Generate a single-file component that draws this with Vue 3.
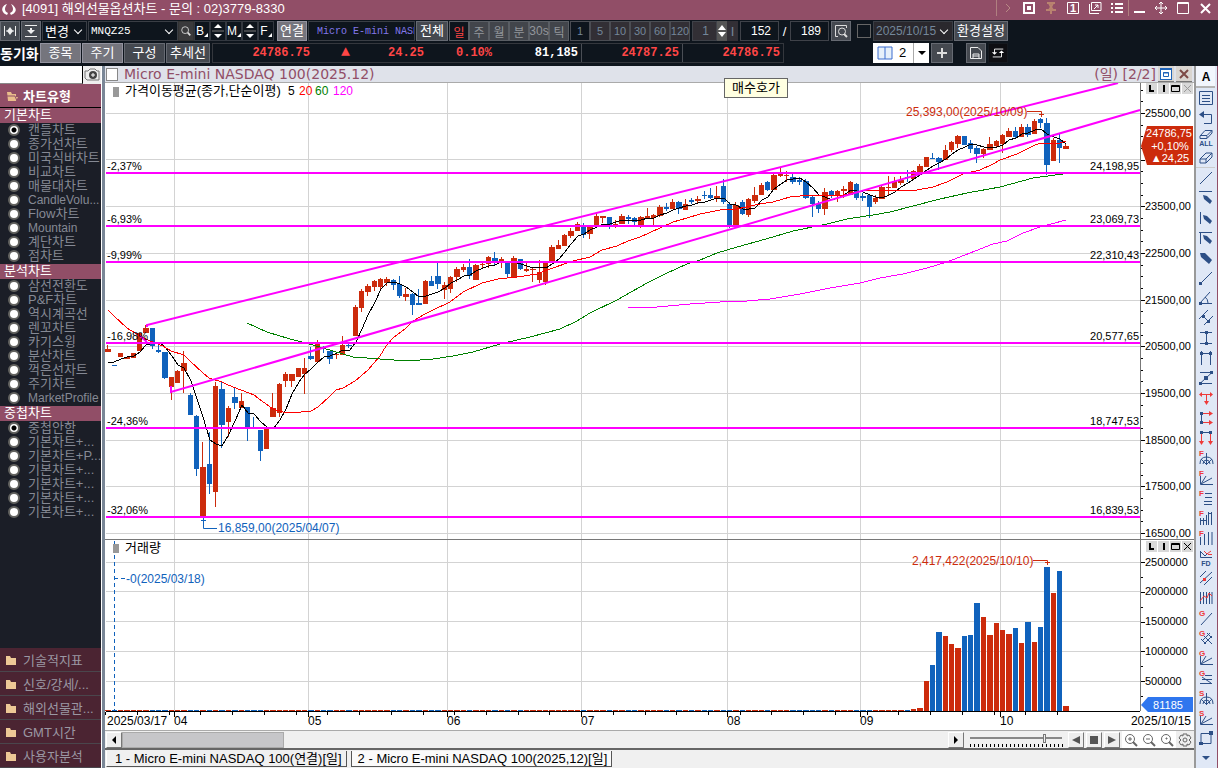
<template>
  <div class="chart-window">
    <header class="titlebar">
      <svg class="logo" viewBox="0 0 16 14">
        <path d="M6 1C2 2 0 6 2 9C3 11 5 11 6 12L7 10C5 9 4 8 4 6C4 4 5 3 6 1ZM10 1C14 3 16 7 14 9C13 11 11 11 10 12L9 10C11 9 12 8 12 6C12 4 11 3 10 1Z" fill="#fff" />
      </svg>
      <h1>[4091] 해외선물옵션차트 - 문의 : 02)3779-8330</h1>
      <div class="window-buttons">
        <button v-for="w in windowButtons" :key="w.name" :class="{ edge: w.edge }" :aria-label="w.name">
          <svg viewBox="0 0 14 14"><path :d="w.path" :stroke="w.color || '#fff'" :stroke-width="w.width || 1" :fill="w.fill || 'none'" /><text v-if="w.text" x="7" y="11" text-anchor="middle">{{ w.text }}</text></svg>
        </button>
      </div>
    </header>

    <!-- 종목 / 주기 선택 -->
    <div class="toolbar">
      <button class="tb icon-btn" aria-label="폭 맞춤"><svg viewBox="0 0 14 14"><path d="M1.5 2V12M12.5 2V12M3 7H11" stroke="#eee" /><path d="M7 3L10 7L7 11L4 7Z" fill="#eee" /></svg></button>
      <button class="tb icon-btn gap-1" aria-label="높이 맞춤"><svg viewBox="0 0 14 14"><path d="M1 1.5H13M1 12.5H13" stroke="#eee" /><path d="M3 6H11L7 10ZM6 4H8V6H6Z" fill="#eee" /></svg></button>
      <span class="select-box change"><select aria-label="변경"><option>변경</option></select></span>
      <span class="select-box symbol"><select aria-label="종목코드"><option>MNQZ25</option></select></span>
      <button class="tb search" aria-label="검색"><svg viewBox="0 0 14 14"><circle cx="6" cy="6" r="4" fill="none" stroke="#ddd" /><path d="M9 9L12 12" stroke="#ddd" stroke-width="2" /></svg></button>
      <template v-for="m in ['B', 'M', 'F']" :key="m">
        <button class="mini">{{ m }}<i></i></button>
        <button v-if="m !== 'F'" class="mini" :aria-label="m + ' 이동'"><svg viewBox="0 0 14 16"><path d="M7 1L11 5H3ZM7 15L11 11H3Z" fill="#fff" /><path d="M1 8H13" stroke="#777" /></svg></button>
      </template>
      <button class="tb light link-btn">연결</button>
      <input class="name-box" value=" Micro E-mini NASDAQ" aria-label="종목명" />
      <button class="tb all-btn">전체</button>
      <div class="segment">
        <button v-for="p in periods" :key="p" :class="{ on: p === '일' }">{{ p }}</button>
      </div>
      <div class="segment minutes">
        <button v-for="n in [1, 5, 10, 30, 60, 120]" :key="n" :class="{ on: n === 1 }">{{ n }}</button>
      </div>
      <input class="custom-min" value="1" aria-label="분" />
      <button class="spin" aria-label="증감"><svg viewBox="0 0 10 18"><path d="M5 3L9 8H1ZM5 15L9 10H1Z" fill="#fff" /></svg></button>
      <button class="apply">I</button>
      <input class="count-box" value="152" aria-label="표시 봉수" />
      <span class="slash">/</span>
      <input class="count-box" value="189" aria-label="전체 봉수" />
      <button class="tb icon-btn lookup" aria-label="조회"><svg viewBox="0 0 14 14"><path d="M4 12.5H1.5V1.5H12.5V4" fill="none" stroke="#ddd" /><circle cx="8" cy="7.500" r="3.500" fill="none" stroke="#ddd" /><path d="M10 10L13 13" stroke="#ddd" stroke-width="2" /></svg></button>
      <input type="checkbox" class="date-check" aria-label="기준일 사용" />
      <span class="select-box date"><select aria-label="기준일"><option>2025/10/15</option></select></span>
      <button class="tb config">환경설정</button>
    </div>

    <div class="toolbar quotes">
      <strong>동기화</strong>
      <button class="tb light w-40">종목</button>
      <button class="tb light w-40">주기</button>
      <button class="tb w-40">구성</button>
      <button class="tb w-44">추세선</button>
      <div class="quote-box">
        <span class="q-price">24786.75</span>
        <span class="q-arrow">▲</span>
        <span class="q-diff">24.25</span>
        <span class="q-rate">0.10%</span>
        <span class="q-vol">81,185</span>
        <span class="q-ask">24787.25</span>
        <span class="q-bid">24786.75</span>
      </div>
      <label class="layout-pick">
        <svg viewBox="0 0 16 14"><path d="M1 1H15V13H1ZM8 1V13" fill="#e6f0fa" stroke="#3a6ccf" /></svg>
        <select aria-label="화면 분할"><option>2</option></select>
        <i></i>
      </label>
      <button class="tb plus" aria-label="추가"><svg viewBox="0 0 14 14"><path d="M7 2V12M2 7H12" stroke="#ddd" stroke-width="2" /></svg></button>
      <button class="tb icon-btn save" aria-label="저장"><svg viewBox="0 0 14 14"><path d="M1.5 1.5H9L12.5 5V12.5H1.5ZM4 12V8H10V12M4 10H10" fill="none" stroke="#eee" /></svg></button>
      <button class="tb icon-btn swap" aria-label="새로고침"><svg viewBox="0 0 16 14"><path d="M14 2.500H4V7M2 11.500H12V6" fill="none" stroke="#fff" /><path d="M1 6H7L4 9ZM9 7H15L12 4Z" fill="#fff" /></svg></button>
    </div>

    <main class="workspace">
      <aside class="sidebar">
        <div class="side-search">
          <input type="text" aria-label="차트 검색" />
          <button aria-label="캡처"><svg viewBox="0 0 16 14"><path d="M1 3H4L6 1H11L13 3H15V12H3L1 10Z" fill="#eee" stroke="#777" /><circle cx="9" cy="7" r="4" fill="#444" /><path d="M9 5V9M7 7H11" stroke="#fff" /></svg></button>
        </div>
        <h2><svg viewBox="0 0 12 12"><path d="M1 2H5L6 4H10V7H12L10 11H2Z" fill="#e9bd8b" /><path d="M0 6H9L11 11" fill="none" stroke="#914e67" /></svg>차트유형</h2>
        <section v-for="group in chartGroups" :key="group.title">
          <h3>{{ group.title }}</h3>
          <ul>
            <li v-for="(item, i) in group.items" :key="i">
              <label :class="{ latin: /^[A-Za-z.]+$/.test(item) }">
                <input v-model="group.selected" type="radio" :name="group.title" :value="i" />
                <span>{{ item }}</span>
              </label>
            </li>
          </ul>
        </section>
        <nav>
          <button v-for="f in folders" :key="f"><svg viewBox="0 0 10 10"><path d="M0 1H4L5 3H10V10H0Z" fill="#edc896" /></svg>{{ f }}</button>
        </nav>
      </aside>

      <section class="chart-panel">
        <div class="chart-head">
          <input type="checkbox" aria-label="차트 선택" />
          <h2>Micro E-mini NASDAQ 100(2025.12)</h2>
          <span>(일) [2/2]</span>
          <button aria-label="최대화"><svg viewBox="0 0 14 14"><rect x="1" y="1" width="12" height="12" fill="#1e63b8" /><rect x="2" y="3" width="10" height="9" fill="#fff" /><path d="M4.500 5.500H9.500V9.500H4.500ZM4 6H10" fill="none" stroke="#1e63b8" /></svg></button>
          <button aria-label="닫기"><svg viewBox="0 0 14 14"><path d="M3 3L11 11M11 3L3 11" stroke="#7d4a45" stroke-width="2" /></svg></button>
        </div>
        <div class="tooltip">매수호가</div>
        <div v-for="pane in ['price', 'volume']" :key="pane" class="pane-tools" :class="pane">
          <button v-for="t in paneTools" :key="t.name" :aria-label="t.name"><svg viewBox="0 0 11 11"><path :d="t.path" fill="none" :stroke="pane === 'price' && t.name === '닫기' ? '#999' : '#000'" :stroke-width="t.width" /></svg></button>
        </div>

        <svg class="plot" viewBox="105 83 1089 648">
          <rect x="105" y="83" width="1089" height="648" fill="#fff" />
          <g class="grid">
            <path v-for="y in gridY" :key="y" :d="`M106 ${y}.5H1140`" />
            <path v-for="m in months" :key="m.x" :d="`M${m.x}.5 83V711`" />
          </g>

          <!-- 거래량 -->
          <g shape-rendering="crispEdges">
            <rect v-for="c in candles" :key="c.i" :x="c.x" :y="c.volTop" :width="c.w" :height="711 - c.volTop" :fill="c.color" />
          </g>

          <!-- 봉 -->
          <g shape-rendering="crispEdges">
            <template v-for="c in candles" :key="c.i">
              <rect :x="c.x + 2" :y="c.high" width="1" :height="c.low - c.high" :fill="c.color" />
              <rect :x="c.x" :y="c.top" :width="c.w" :height="Math.max(1, c.bottom - c.top)" :fill="c.color" />
            </template>
          </g>

          <g fill="none" shape-rendering="crispEdges">
            <polyline :points="ma5" stroke="#000" />
            <polyline :points="ma20" stroke="#f00" />
            <polyline :points="ma60" stroke="#008000" />
            <polyline :points="ma120" stroke="#f0f" />
          </g>

          <g stroke="#f0f" stroke-width="2" fill="none">
            <path v-for="l in levels" :key="l.y" :d="`M106 ${l.y}H1140`" />
            <path d="M140 336L147 342M147 327V325L1118 83M171 386V392L1140 110" />
          </g>

          <g class="num">
            <template v-for="l in levels" :key="l.y">
              <text x="107" :y="l.y - 3">{{ l.pct }}</text>
              <text x="1139" :y="l.y - 3" text-anchor="end">{{ l.price }}</text>
            </template>
          </g>

          <text class="ko" x="125" y="95">가격이동평균(종가,단순이평)</text>
          <text class="date" y="95"><tspan x="288">5</tspan><tspan x="299" fill="#f00">20</tspan><tspan x="315" fill="#008000">60</tspan><tspan x="333" fill="#f0f">120</tspan></text>
          <rect x="113" y="87" width="6" height="10" fill="#999" />

          <g fill="none" stroke="#cc2b0c">
            <path d="M1027 111.5H1041.5V117M1039 114.5H1044M1033 560.5H1047.5V565M1045 562.5H1050" />
          </g>
          <text class="date up" x="906" y="116">25,393,00(2025/10/09)</text>
          <text class="date up" x="912" y="565">2,417,422(2025/10/10)</text>
          <path d="M203.500 518V528.500H217M201 520.500H206" fill="none" stroke="#1062bc" />
          <text class="date down" x="218" y="532">16,859,00(2025/04/07)</text>

          <path d="M105 539.5H1194" stroke="#777" />
          <path d="M114.500 541V711M114 578.500H128" stroke="#1062bc" stroke-dasharray="4 3" fill="none" />
          <rect x="113" y="544" width="6" height="9" fill="#999" />
          <text class="ko" x="125" y="552">거래량</text>
          <text class="date down" x="126" y="583">-0(2025/03/18)</text>

          <!-- 축 -->
          <path d="M1140.5 83V711" stroke="#777" />
          <path d="M106 711.5H1140" stroke="#000" />
          <path :d="priceTicks" stroke="#000" />
          <path :d="dateTicks" stroke="#000" />
          <g class="num">
            <text v-for="(p, i) in priceLabels" :key="i" x="1145" :y="gridY[i] + 4">{{ p }}</text>
            <text v-for="(v, i) in volumeLabels" :key="v" x="1145" :y="gridY[i + 10] + 4">{{ v }}</text>
          </g>
          <g class="date">
            <text x="107" y="725">2025/03/17</text>
            <text v-for="m in months" :key="m.x" :x="m.x" y="725">{{ m.label }}</text>
            <text x="1191" y="725" text-anchor="end">2025/10/15</text>
          </g>
          <path d="M1141 146L1147 126H1193V165H1147Z" fill="#cc2b0c" />
          <g class="num flag">
            <text x="1169" y="137">24786,75</text>
            <text x="1170" y="150">+0,10%</text>
            <text x="1170" y="162">▲24,25</text>
          </g>
          <path d="M1141 705L1148 697H1193V712H1148Z" fill="#2f76ee" />
          <text class="num flag" x="1168" y="709">81185</text>
          <path d="M105 730.5H1194" stroke="#aaa" />
        </svg>

        <div class="scroll-row">
          <button class="bevel arrow" aria-label="왼쪽"><svg viewBox="0 0 14 14"><path d="M5 7L9 3V11Z" /></svg></button>
          <div class="track"><div class="thumb" :style="{ width: thumbWidth + '%' }"></div></div>
          <button class="bevel arrow" aria-label="오른쪽"><svg viewBox="0 0 14 14"><path d="M9 7L5 3V11Z" /></svg></button>
          <div class="zoom-slider">
            <input v-model="zoom" type="range" min="0" max="100" aria-label="확대" />
            <i></i>
          </div>
          <button class="bevel play" aria-label="뒤로"><svg viewBox="0 0 14 14"><path d="M3 7L11 3V11Z" /></svg></button>
          <button class="bevel play" aria-label="정지"><svg viewBox="0 0 14 14"><path d="M3 3H11V11H3Z" /></svg></button>
          <button class="bevel play" aria-label="재생"><svg viewBox="0 0 14 14"><path d="M11 7L3 3V11Z" /></svg></button>
          <button v-for="(z, i) in ['M4 6H8M6 4V8', 'M4 6H8', 'M6 5H7V6H6Z']" :key="i" class="lens" :aria-label="'확대 ' + i"><svg viewBox="0 0 14 14"><circle cx="6" cy="6" r="4.500" /><path :d="z" /><path d="M9 9L13 13" stroke-width="2" /></svg></button>
          <button class="lens gear" aria-label="설정"><svg viewBox="0 0 14 14"><path d="M5 1H9V3L11 2L13 5L11 7L13 9L11 12L9 11V13H5V11L3 12L1 9L3 7L1 5L3 2L5 3Z" /><circle cx="7" cy="7" r="2" /></svg></button>
        </div>

        <div class="tabs">
          <button>1 - Micro E-mini NASDAQ 100(연결)[일]</button>
          <button class="active">2 - Micro E-mini NASDAQ 100(2025,12)[일]</button>
        </div>
      </section>

      <aside class="draw-tools">
        <button v-for="t in drawTools" :key="t.name" :class="{ first: t.name === '글자' , line: t.name === '지우개' }" :aria-label="t.name">
          <svg viewBox="0 0 14 16">
            <path v-if="t.d" :d="t.d" fill="none" stroke="#2d4f86" />
            <path v-if="t.f" :d="t.f" fill="#2d4f86" />
            <path v-if="t.r" :d="t.r" fill="none" stroke="#ee3a3a" />
            <path v-if="t.rf" :d="t.rf" fill="#ee3a3a" />
            <text v-if="t.letter" x="0" y="6" class="letter">{{ t.letter }}</text>
            <text v-if="t.label" x="7" :y="t.name === '글자' ? 13 : 16" :class="t.name === '글자' ? 'big' : 'small'">{{ t.label }}</text>
          </svg>
        </button>
      </aside>
    </main>
  </div>
</template>

<script setup>
import { ref, reactive, computed } from 'vue'

const zoom = ref(82)
const thumbWidth = ref(19.6)

const periods = ['일', '주', '월', '분', '30s', '틱']

const windowButtons = [
  { name: '펼치기', path: 'M5 3L9 7L5 11', color: '#b98a86', edge: true },
  { name: '캡처', path: 'M2 2H12V12H2ZM6 6H8V8H6Z', width: 2 },
  { name: '고정', path: 'M3 2H11M5 2L7 6L9 2M5 9L7 6L9 9M2 9H12M7 9V13', color: '#b9836f', width: 2 },
  { name: '화면번호', path: 'M1.5 1.5H12.5V12.5H1.5Z', text: '1' },
  { name: '새창', path: 'M3.5 1.5H13V9.5H3.5ZM1.5 3V12.5H11M6 8L10 4M7 4H10V7' },
  { name: '메뉴', path: 'M1 3H3M5 3H13M1 7H3M5 7H13M1 11H3M5 11H13', width: 2 },
  { name: '최소화', path: 'M1 11H12', width: 2, edge: true },
  { name: '이동', path: 'M7 1V13M1 7H13M5 3L7 1L9 3M5 11L7 13L9 11M3 5L1 7L3 9M11 5L13 7L11 9' },
  { name: '최대화', path: 'M1.500 1.500H12.500V12.500H1.500ZM1 2.500H13' },
  { name: '닫기', path: 'M3 3L12 12M12 3L3 12', width: 2 }
]

const chartGroups = reactive([
  {
    title: '기본차트',
    selected: 0,
    items: ['캔들차트', '종가선차트', '미국식바차트', '비교차트', '매물대차트', 'CandleVolu...', 'Flow차트', 'Mountain', '계단차트', '점차트']
  },
  {
    title: '분석차트',
    selected: null,
    items: ['삼선전환도', 'P&F차트', '역시계곡선', '렌꼬차트', '카기스윙', '분산차트', '꺽은선차트', '주기차트', 'MarketProfile']
  },
  {
    title: '중첩차트',
    selected: 0,
    items: ['중첩안함', '기본차트+...', '기본차트+P...', '기본차트+...', '기본차트+...', '기본차트+...', '기본차트+...']
  }
])

const folders = ['기술적지표', '신호/강세/...', '해외선물관...', 'GMT시간', '사용자분석']

const paneTools = [
  { name: '로그', path: 'M4 2V8H8', width: 2 },
  { name: '지표', path: 'M6 2V9', width: 2 },
  { name: '확대', path: 'M1.500 2.500H9.500V8.500H1.500ZM1 3.500H10', width: 1 },
  { name: '닫기', path: 'M2 2L9 9M9 2L2 9', width: 1 }
]

const gridY = [113, 159, 206, 253, 300, 346, 393, 440, 486, 533, 562, 591, 621, 651, 681]
const priceLabels = ['25500,00', '', '23500,00', '22500,00', '21500,00', '20500,00', '19500,00', '18500,00', '17500,00', '16500,00']
const volumeLabels = ['2500000', '2000000', '1500000', '1000000', '500000']
const months = [
  { x: 174, label: '04' },
  { x: 308, label: '05' },
  { x: 447, label: '06' },
  { x: 581, label: '07' },
  { x: 727, label: '08' },
  { x: 860, label: '09' },
  { x: 1000, label: '10' }
]

const levels = [
  { y: 173, pct: '-2,37%', price: '24,198,95' },
  { y: 226, pct: '-6,93%', price: '23,069,73' },
  { y: 262, pct: '-9,99%', price: '22,310,43' },
  { y: 343, pct: '-16,98%', price: '20,577,65' },
  { y: 428, pct: '-24,36%', price: '18,747,53' },
  { y: 517, pct: '-32,06%', price: '16,839,53' }
]

// 봉: 색, 고가, 몸통 위, 몸통 아래, 저가
const bars = `
r345,349,352,352 b365,365,366,366 r353,353,357,357 r357,357,359,359 r353,353,358,358 r333,333,351,351 r325,328,333,333 b328,328,346,349
b344,350,352,353 b352,352,378,379 r377,377,387,400 r370,371,383,383 r351,363,371,393 b393,395,415,415 b415,416,469,476 r442,467,517,517
b432,464,484,494 r382,386,492,507 b382,389,425,448 r406,408,422,437 b388,397,403,409 r393,401,408,408 b407,407,428,441 b417,427,428,429
b430,430,451,461 r428,428,449,449 r393,408,417,417 r383,384,413,417 r372,374,381,387 r374,374,381,387 r368,368,377,377 r358,368,374,394
b347,356,359,360 r340,343,362,362 b346,347,349,353 b351,351,359,364 r352,354,355,359 r336,345,355,355 b343,345,346,348 r305,307,336,336
r289,291,308,312 r284,286,292,296 r280,281,287,291 r278,279,287,290 r277,279,283,286 b279,280,285,290 b276,284,296,298 r288,294,297,301
b293,294,305,315 b289,303,305,305 r280,281,304,304 b276,281,286,286 b262,276,284,289 r282,285,290,299 r276,277,289,293 r267,269,277,282
r264,267,270,272 b259,267,276,279 r264,265,280,280 r262,264,265,269 r256,257,264,268 b252,258,261,265 r257,259,262,268 b262,262,274,278
r256,258,278,278 b259,259,269,270 r263,269,271,272 r268,269,270,282 r260,272,280,283 r262,262,282,285 r245,247,262,262 r240,245,249,249
r234,235,246,246 r228,231,236,238 r222,224,231,231 b223,226,235,238 r227,227,234,239 r213,216,225,225 r216,216,218,223 b217,217,226,229
r220,224,226,228 r214,216,224,224 b215,217,219,224 b217,218,222,225 r216,217,226,228 r208,216,218,218 r214,215,218,226 r205,207,216,217
b203,207,209,211 r199,202,209,209 b201,202,209,214 r199,204,210,210 b198,200,202,204 r196,199,201,204 b191,195,196,199 b188,195,198,199
r186,196,198,202 b179,186,202,204 b202,204,226,228 r202,205,226,226 b200,202,214,215 r198,199,215,217 r187,195,201,203 r183,185,195,195
b181,182,190,191 r174,175,190,190 r168,174,176,177 r171,175,176,182 b174,177,182,184 b177,180,182,185 b179,181,198,199 b196,197,204,217
b201,204,209,213 r188,192,209,215 b190,191,196,198 r190,191,196,202 r186,189,191,198 r181,182,195,195 b183,184,198,200 b193,196,198,201
b194,195,207,218 r195,198,202,204 r186,187,199,199 r176,187,188,196 r177,181,188,188 r176,180,183,185 b170,177,178,182 r170,171,179,179
r164,166,172,172 r157,157,167,167 b153,158,159,159 b157,158,162,170 r145,150,160,160 r141,142,150,152 r135,136,144,148 b136,136,145,145
b140,143,149,153 b146,148,154,163 r148,149,154,158 r137,144,150,150 r140,141,146,148 r134,135,144,153 r128,131,137,137 b127,131,137,139
r124,127,137,137 b124,127,135,137 r119,121,134,134 b118,119,123,128 b118,123,165,175 r138,140,161,161 b134,140,148,163 r144,146,149,149
`.trim().split(/\s+/)

const volumeTops = [709, 708, 681, 665, 632, 636, 644, 648, 636, 635, 603, 617, 635, 623, 630, 634, 628, 643, 622, 642, 627, 567, 593, 571, 706]

const startX = 105.3
const endX = 1063.3
const step = (endX - startX) / (bars.length - 1)
const slotX = (i) => Math.round(startX + i * step)

const candles = bars.map((bar, i) => {
  const [high, top, bottom, low] = bar.slice(1).split(',').map(Number)
  const up = bar[0] === 'r'
  const vi = i - (bars.length - volumeTops.length)
  return {
    i,
    x: slotX(i),
    w: slotX(i + 1) - slotX(i) - 1,
    high,
    top,
    bottom,
    low,
    close: up ? top : bottom,
    color: up ? '#cc2b0c' : '#1062bc',
    volTop: vi >= 0 ? volumeTops[vi] : 710
  }
})

const ma5 = computed(() => {
  const points = ['108,363', '114,362', '121,359', '127,357']
  for (let i = 4; i < candles.length; i++) {
    const sum = candles.slice(i - 4, i + 1).reduce((a, c) => a + c.close, 0)
    points.push(`${slotX(i) + 3},${Math.round(sum / 5)}`)
  }
  return points.join(' ')
})

const ma20 = '108,310 114,316 127,328 140,336 150,341 163,346 171,351 184,355 190,361 203,373 209,378 222,382 228,385 241,390 254,395 266,404 273,409 283,412 301,412 311,411 318,407 330,396 336,390 343,388 355,381 368,370 380,356 386,346 393,338 406,328 413,321 425,314 433,310 450,302 463,292 482,283 498,279 517,277 537,274 547,270 573,261 590,257 602,250 617,246 628,241 640,237 660,228 673,222 687,218 700,214 720,210 737,209 760,204 773,202 790,197 810,195 843,195 867,190 917,190 933,187 947,182 963,174 980,170 993,164 1000,160 1017,154 1033,146 1040,143 1057,144 1066,141'
const ma60 = '247,323 267,332 290,339 313,345 333,351 353,357 380,359 407,361 433,359 453,356 473,352 500,344 530,337 560,329 577,321 590,313 617,300 647,283 667,273 687,264 700,260 717,253 737,247 766,239 793,231 827,224 847,219 873,215 890,212 913,206 940,199 967,193 1000,187 1033,178 1063,174'
const ma120 = '628,308 657,307 690,304 720,302 747,301 770,299 800,294 830,288 860,283 880,278 903,274 927,268 947,262 970,253 993,244 1007,241 1023,233 1040,227 1066,220'

const priceTicks = computed(() => {
  let d = ''
  for (let i = -2; i <= 36; i++) {
    const y = Math.round(113 + (i * 420) / 36)
    d += `M1141 ${y}.5h${i % 4 ? 2 : 4}`
  }
  for (let i = 0; i < 10; i++) {
    d += `M1141 ${Math.round(562 + i * 14.9)}.5h${i % 2 ? 2 : 4}`
  }
  return d
})

const dateTicks = computed(() => {
  let d = ''
  for (let i = 0; i <= 150; i += 5) d += `M${slotX(i)}.5 712v3`
  return d + months.map((m) => `M${m.x}.5 712v5`).join('')
})

const pencil = 'M4 5L8 6L13 11L11 14L5 9Z'
const fan = 'M1 14Q1 7 7.500 7Q14 7 14 14M4 14Q4 10 7.500 10Q11 10 11 14M7.500 3V15M7 14L2 9M8 14L13 9'
const angleFan = 'M1.500 6V14.500H14M2 14L7 6M2 14L13 8'

const drawTools = [
  { name: '글자', label: 'A' },
  { name: '목록', d: 'M.5 1.5H13.5V14.5H.5ZM3 5.5H11M3 8.5H11M3 11.500H11' },
  { name: '되돌리기', d: 'M2 4.5H12.5V13.5H5', f: 'M0 4.500L5 1V8Z' },
  { name: '전체삭제', d: 'M1 6L6 .5H13V3L8 8.500H1ZM1 5.500H8L13 .5M8 6V8', label: 'ALL' },
  { name: '지우개', d: 'M1 9L7 3H13V7L7 13H1ZM1 9H7L13 3M7 9V13' },
  { name: '추세선', d: 'M1 14L13 2' },
  { name: '수평선', d: 'M0 1.500H13', f: 'M4 5L8 6L13 11L11 14L5 9Z' },
  { name: '수직선', d: 'M1.500 2V14', f: pencil },
  { name: '십자선', d: 'M1.500 2V14M0 2.500H13', f: pencil },
  { name: '펜', f: 'M1 3L6 3L13 10L10 14L2 7Z' },
  { name: '반직선', d: 'M1 14L13 2', f: 'M0 12H3V15H0Z' },
  { name: '각도선', d: 'M1 13.500H13M1 13L11 2M6 7Q9 9 9 13', f: 'M0 12H3V15H0Z' },
  { name: '평행선', d: 'M0 9L9 0M5 15L14 6M4 6L10 12', f: 'M3 5H6V8H3ZM8 10H11V13H8Z' },
  { name: '수직구간', d: 'M1 2.500H13M1 13.500H13M7.500 3V13', f: 'M6 1H9V4H6ZM6 12H9V15H6Z' },
  { name: '수평구간', d: 'M1 3.500H13M2.500 1V15M11.500 1V15', f: 'M1 2H4V5H1ZM10 2H13V5H10Z' },
  { name: '지그재그', d: 'M1 2.500H13L1 13.500H13', f: 'M5 6H9V10H5ZM11 1H14V4H11ZM0 12H3V15H0Z' },
  { name: '되돌림폭', r: 'M1 4.500H13M7.500 4V14', rf: 'M0 4.500L3 2V7ZM14 4.500L11 2V7ZM5 11H10L7.500 15Z' },
  { name: '가격목표', d: 'M2.500 2V14', f: 'M1 2H4V5H1ZM1 11H4V14H1Z', r: 'M4 3.500H12M4 12.500H12', rf: 'M10 1L14 3.500L10 6ZM10 10L14 12.500L10 15Z' },
  { name: '시간목표', d: 'M2 2.500H12', f: 'M1 1H4V4H1ZM10 1H13V4H10Z', r: 'M2.500 4V13M11.500 4V13', rf: 'M0 11H5L2.500 15ZM9 11H14L11.500 15Z' },
  { name: '피보나치 원', letter: 'F', d: fan },
  { name: '피보나치 팬', letter: 'F', d: angleFan },
  { name: '피보나치 되돌림', letter: 'F', d: 'M6 3.500H13M6 7.500H13M5 11.500H13M5 14.500H13' },
  { name: '피보나치 확장', letter: 'F', d: 'M1.500 8V15M4.500 8V15M7.500 5V15M9.500 2V15M12.500 2V15M1 10.500H8M9 3.500H13' },
  { name: '피보나치 시간', letter: 'F', d: 'M1.500 7V15M5.500 4V15M9.500 2V15M13 2V15' },
  { name: '매물 FD', d: 'M1.500 1V7.500H13M2 2L6 6L9 3', r: 'M5 1L8 4L12 1M9 4.500H13', label: 'FD' },
  { name: '채널', d: 'M1 7L7 1M1 13L13 2M5 15L13 7', rf: 'M4 8H7V11H4Z' },
  { name: '사이클', d: 'M1.500 2V14M4.500 2V14M7.500 2V14M10.500 2V14M13 2V14', r: 'M1 11L5 6L8 8L10 3L13 6' },
  { name: '갠 라인', letter: 'G', d: 'M2 15L13 3' },
  { name: '갠 그리드', letter: 'G', d: 'M3 11L11 3M5 14L13 6M5 6L13 14M8 3L13 8M2 9L7 14' },
  { name: '갠 팬', letter: 'G', d: angleFan },
  { name: '갠 되돌림', letter: 'G', d: 'M6 5.500H13M3 9.500H13M1 13.500H13M3 7L12 13' },
  { name: '스피드 원', letter: 'S', d: fan },
  { name: '스피드 팬', letter: 'S', d: angleFan },
  { name: '사각형', d: 'M2 3.500H12V13.500H2Z', f: 'M10 1H14V5H10ZM0 12H4V15H0Z' },
  { name: '더보기', f: 'M3 6H11L7 10Z' }
]
</script>

<style>
body {
  margin: 0;
  background: #0e151d;
}
</style>

<style scoped>
.chart-window {
  display: flex;
  flex-direction: column;
  min-height: 100vh;
  font-family: "Liberation Sans", "Noto Sans CJK KR", sans-serif;
  font-size: 13px;
  color: #fff;
  background: #0e151d;
}

* {
  box-sizing: border-box;
}

button,
input,
select {
  font: inherit;
  color: inherit;
  margin: 0;
  padding: 0;
  border: 0;
  border-radius: 0;
  background: none;
}

select {
  appearance: none;
}

h1,
h2,
h3,
ul {
  margin: 0;
  padding: 0;
  font-size: 13px;
  font-weight: normal;
  list-style: none;
}

button {
  display: flex;
  align-items: center;
  justify-content: center;
  flex-shrink: 0;
  white-space: nowrap;
}

.titlebar {
  display: flex;
  align-items: center;
  height: 20px;
  background: #914e67;
}

.logo {
  width: 16px;
  height: 14px;
  margin: 0 5px 0 1px;
}

.titlebar h1 {
  line-height: 16px;
  padding-bottom: 3px;
}

.window-buttons {
  display: flex;
  margin-left: auto;
  padding: 0 2px 4px 0;
}

.window-buttons button {
  width: 22px;
  height: 16px;
}

.window-buttons .edge {
  border-left: 1px solid #b08080;
}

.window-buttons svg {
  width: 14px;
  height: 14px;
}

.window-buttons text {
  font-size: 11px;
  font-weight: bold;
  fill: #fff;
}

/* 툴바 */
.toolbar {
  display: flex;
  align-items: center;
  height: 22px;
}

.tb {
  height: 20px;
  background: #454950;
  border: 1px solid #666a72;
  line-height: 16px;
}

.light {
  background: #75757d;
  border-color: #93939f;
}

.icon-btn {
  width: 20px;
}

.icon-btn svg {
  width: 14px;
  height: 14px;
}

.gap-1 {
  margin-left: 1px;
}

.select-box {
  position: relative;
  display: flex;
  flex-shrink: 0;
  height: 20px;
  border: 1px solid #3a3e45;
}

.select-box select {
  width: 100%;
  padding-left: 2px;
}

.select-box::after {
  content: "";
  position: absolute;
  right: 5px;
  top: 5px;
  width: 5px;
  height: 5px;
  border: solid #fff;
  border-width: 0 1px 1px 0;
  transform: rotate(45deg);
}

.change {
  width: 45px;
  margin-left: 1px;
}

.symbol {
  width: 90px;
  margin-left: 1px;
  font-family: "Liberation Mono", monospace;
  font-size: 11px;
}

.search {
  width: 16px;
  border-color: #333;
  background: #3a3a3c;
}

.search svg {
  width: 12px;
  height: 12px;
}

.mini {
  width: 16px;
  height: 20px;
  border: 1px solid #333840;
  font-size: 12px;
}

.mini svg {
  width: 14px;
  height: 16px;
}

.mini i {
  align-self: flex-end;
  border: 2px solid transparent;
  border-right-color: #fff;
  border-bottom-color: #fff;
  margin-bottom: 3px;
}

.link-btn {
  width: 30px;
  margin-left: 3px;
}

.name-box {
  width: 107px;
  height: 20px;
  margin-left: 1px;
  border: 1px solid #3a3e45;
  font-family: "Liberation Mono", monospace;
  font-size: 10px;
  color: #8378ea;
  padding-left: 2px;
}

.all-btn {
  width: 32px;
  margin-left: 1px;
}

.segment {
  display: flex;
  margin-left: 1px;
}

.segment button {
  width: 20px;
  height: 20px;
  background: #42454b;
  border: 1px solid #5a5e64;
  font-size: 12px;
  color: #93969b;
}

.segment .on {
  background: #0e151d;
  color: #f44;
}

.minutes button {
  background: #322f35;
  border-color: #4b4d53;
  font-size: 11px;
  color: #74879a;
}

.minutes .on {
  color: #74879a;
}

.custom-min,
.count-box {
  flex-shrink: 0;
  height: 20px;
  border: 1px solid #3f4249;
  font-size: 12px;
  text-align: right;
  padding-right: 7px;
}

.custom-min {
  width: 25px;
  margin-left: 2px;
  background: #322f35;
  color: #74879a;
}

.spin {
  width: 10px;
  height: 20px;
  background: #555;
}

.spin svg {
  width: 10px;
  height: 18px;
}

.apply {
  width: 11px;
  height: 20px;
  background: #322f35;
  color: #74879a;
}

.count-box {
  width: 39px;
}

.apply + .count-box {
  margin-left: 2px;
}

.slash {
  width: 11px;
  text-align: center;
}

.lookup {
  margin-left: 2px;
}

.date-check {
  appearance: none;
  width: 14px;
  height: 14px;
  margin: 0 2px 0 6px;
  border: 1px solid #666;
}

.date {
  width: 80px;
  background: #2a282d;
  color: #74879a;
  font-size: 12px;
}

.config {
  width: 54px;
  margin-left: 1px;
}

.quotes {
  height: 24px;
  padding-bottom: 3px;
}

.quotes strong {
  width: 40px;
  flex-shrink: 0;
  font-size: 14px;
}

.w-40 {
  width: 41px;
  margin-right: 1px;
}

.w-44 {
  width: 44px;
  margin-right: 2px;
}

.quote-box {
  display: flex;
  align-items: center;
  flex-shrink: 0;
  height: 20px;
  border: 1px solid #34373d;
  font-family: "Liberation Mono", monospace;
  font-size: 12px;
  line-height: 18px;
  font-weight: bold;
  color: #ff4646;
}

.quote-box span {
  text-align: right;
  padding-right: 3px;
}

.q-price {
  width: 100px;
}

.q-arrow {
  width: 40px;
  font-size: 15px;
}

.q-diff {
  width: 74px;
}

.q-rate {
  width: 68px;
}

.q-vol {
  width: 86px;
  color: #fff;
}

.q-ask,
.q-bid {
  width: 101px;
  border-left: 1px solid #4a4e55;
}

.layout-pick {
  display: flex;
  align-items: center;
  flex-shrink: 0;
  width: 56px;
  height: 20px;
  margin-left: 89px;
  padding-left: 4px;
  background: #fff;
  color: #000;
}

.layout-pick svg {
  width: 16px;
  height: 14px;
}

.layout-pick select {
  flex: 1;
  min-width: 0;
  padding-left: 6px;
}

.layout-pick i {
  width: 16px;
  height: 20px;
  border-left: 1px solid #aaa;
  display: flex;
  align-items: center;
  justify-content: center;
}

.layout-pick i::before {
  content: "";
  border: 4px solid transparent;
  border-top-color: #000;
  border-bottom: 0;
}

.plus {
  width: 22px;
  margin-left: 2px;
}

.plus svg {
  width: 14px;
  height: 14px;
}

.save {
  margin-left: 13px;
}

.swap {
  margin-left: 2px;
  background: #0e0e12;
  border-color: #15191f;
}

.workspace {
  display: grid;
  grid-template-columns: 105px minmax(0, 1fr) 24px;
  flex: 1;
}

/* 왼쪽 메뉴 */
.sidebar {
  display: flex;
  flex-direction: column;
  background: #1b1e27;
  border-right: 3px solid #7a8797;
  box-shadow: inset -1px 0 #fff;
  padding-right: 1px;
}

.side-search {
  display: flex;
  height: 18px;
  background: #eee;
}

.side-search input {
  flex: 1;
  min-width: 0;
  background: #fff;
  border-right: 1px solid #000;
  border-bottom: 1px solid #888;
}

.side-search button {
  width: 18px;
}

.side-search svg {
  width: 16px;
  height: 14px;
}

.sidebar h2 {
  display: flex;
  align-items: center;
  height: 24px;
  padding-left: 6px;
  background: #914e67;
  border-bottom: 1px solid #000;
  font-weight: bold;
}

.sidebar h2 svg {
  width: 12px;
  height: 12px;
  margin-right: 5px;
}

.sidebar h3 {
  height: 15px;
  padding-left: 4px;
  line-height: 14px;
  background: #914e67;
}

.sidebar ul {
  padding-bottom: 1px;
}

.sidebar label {
  display: flex;
  align-items: center;
  height: 14px;
  line-height: 14px;
  padding-left: 8px;
  color: #858994;
  white-space: nowrap;
  overflow: hidden;
}

.sidebar label.latin {
  font-size: 12px;
}

.sidebar label input {
  appearance: none;
  flex-shrink: 0;
  width: 12px;
  height: 12px;
  margin-right: 8px;
  border: 2px solid #62625f;
  border-radius: 50%;
  background: #fff;
}

.sidebar label input:checked {
  background: radial-gradient(#000 2px, #fff 3px);
}

.sidebar nav {
  margin-top: auto;
}

.sidebar nav button {
  justify-content: flex-start;
  width: 100%;
  height: 24px;
  padding-left: 6px;
  background: #4b2432;
  border-bottom: 1px solid #4a464c;
  color: #9b98a3;
}

.sidebar nav svg {
  width: 10px;
  height: 10px;
  margin-right: 7px;
}

/* 차트 */
.chart-panel {
  position: relative;
  min-width: 0;
  background: #f0f0f0;
  color: #000;
}

.chart-head {
  display: flex;
  align-items: center;
  height: 17px;
  padding: 0 2px 0 1px;
  background: #dfe2ea;
  border-bottom: 1px solid #aaa;
  color: #914e67;
}

.chart-head input {
  appearance: none;
  width: 12px;
  height: 13px;
  border: 1px solid #888;
  background: #fff;
}

.chart-head h2 {
  margin: 0 auto 0 6px;
  font-family: "DejaVu Sans", "Noto Sans CJK KR", sans-serif;
  font-size: 14px;
  line-height: 16px;
}

.chart-head span {
  font-family: "DejaVu Sans", "Noto Sans CJK KR", sans-serif;
  font-size: 14px;
  line-height: 16px;
}

.chart-head button {
  width: 16px;
  height: 16px;
  margin-left: 2px;
  background: #d9d5d0;
  border-bottom: 1px solid #777;
}

.chart-head button svg {
  width: 14px;
  height: 14px;
}

.plot {
  display: block;
  width: 100%;
}

.grid path {
  stroke: #d3d3d3;
}

.num {
  font-size: 11px;
}

.date {
  font-size: 12px;
}

text.ko {
  font-size: 13px;
}

.up {
  fill: #cc2b0c;
}

.down {
  fill: #1062bc;
}

.flag {
  fill: #fff;
  text-anchor: middle;
}

.tooltip {
  position: absolute;
  left: 619px;
  top: 12px;
  width: 64px;
  height: 20px;
  background: #ffffe1;
  border: 1px solid #666;
  font-size: 13px;
  line-height: 17px;
  text-align: center;
}

.pane-tools {
  position: absolute;
  right: 1px;
  display: flex;
  gap: 1px;
}

.pane-tools.price {
  top: 17px;
}

.pane-tools.volume {
  top: 475px;
}

.pane-tools button {
  width: 11px;
  height: 11px;
  background: #d8d8d8;
}

.pane-tools svg {
  width: 11px;
  height: 11px;
}

.scroll-row {
  display: flex;
  align-items: center;
  height: 18px;
  padding-left: 1px;
  border-bottom: 1px solid #666;
}

.bevel {
  width: 16px;
  height: 16px;
  background: #eee;
  border: 1px solid;
  border-color: #fff #777 #777 #fff;
}

.arrow svg {
  width: 14px;
  height: 14px;
}

.track {
  flex: 1;
  height: 16px;
  background: #f0f0f0;
}

.thumb {
  height: 16px;
  background: #c6c6c9;
  border: 1px solid #aaa;
}

.zoom-slider {
  width: 102px;
  padding: 0 4px 0 6px;
  margin-right: 2px;
}

.zoom-slider input {
  display: block;
  appearance: none;
  width: 92px;
  height: 11px;
  background: linear-gradient(#888, #888) 0 4px / 100% 2px no-repeat;
}

.zoom-slider input::-webkit-slider-thumb {
  appearance: none;
  width: 3px;
  height: 9px;
  background: #eee;
  border: 1px solid #777;
}

.zoom-slider i {
  display: block;
  width: 94px;
  height: 3px;
  background: repeating-linear-gradient(90deg, #000 0 1px, #f0f0f0 1px 4px);
}

.play {
  margin-right: 2px;
}

.play svg,
.lens svg {
  width: 14px;
  height: 14px;
}

.play path {
  fill: #555;
}

.lens {
  width: 18px;
  height: 17px;
  background: #fff;
}

.lens svg {
  fill: none;
  stroke: #666;
}

.lens.gear {
  background: #eee;
}

.tabs {
  display: flex;
  gap: 4px;
  height: 19px;
  padding: 1px 1px 0;
  border-top: 1px solid #666;
  font-size: 13px;
}

.tabs button {
  padding: 0 4px 0 8px;
  height: 16px;
  line-height: 15px;
  background: #f0f0f0;
  border-left: 1px solid #fff;
  border-right: 1px solid #555;
  border-bottom: 1px solid #555;
}

.tabs .active {
  padding-left: 6px;
  background: #fafafa;
  border-left-color: #555;
}

/* 그리기 도구 */
.draw-tools {
  background: #e0e8f6;
  border-left: 2px solid #999;
  border-right: 1px solid #914e67;
  padding-right: 2px;
}

.draw-tools button {
  width: 19px;
  height: 20px;
}

.draw-tools .first {
  height: 22px;
  background: #f2f6fd;
  border-bottom: 2px solid #b5b5b5;
}

.draw-tools .line {
  border-bottom: 1px solid #ccc;
}

.draw-tools svg {
  width: 14px;
  height: 16px;
  overflow: visible;
}

.letter {
  fill: #ee3a3a;
  font-size: 8px;
  font-weight: bold;
}

.small {
  fill: #2d4f86;
  font-size: 7px;
  font-weight: bold;
  text-anchor: middle;
}

.big {
  fill: #000;
  font-size: 12px;
  font-weight: bold;
  text-anchor: middle;
}
</style>
